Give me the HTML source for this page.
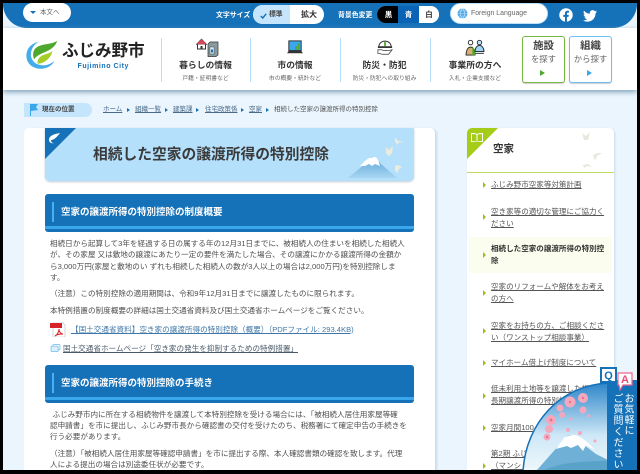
<!DOCTYPE html>
<html lang="ja"><head><meta charset="utf-8"><title>相続した空家の譲渡所得の特別控除</title>
<style>
*{box-sizing:border-box;margin:0;padding:0}
html,body{width:640px;height:474px;overflow:hidden;background:#000}
body{position:relative;font-family:"Liberation Sans","Noto Sans CJK JP",sans-serif;color:#444}
#p{position:absolute;left:3px;top:3px;width:634px;height:467px;background:#eaf5fe;overflow:hidden}
.a{position:absolute;white-space:nowrap}
.t{font-size:7.6px;line-height:11px;color:#4f4f4f;white-space:nowrap;position:absolute}
.n1{font-size:8.8px;font-weight:700;color:#333;line-height:12px;text-align:center;position:absolute;white-space:nowrap}
.n2{font-size:5.8px;color:#666;line-height:8px;text-align:center;position:absolute;white-space:nowrap}
.sep{position:absolute;top:35px;width:1px;height:44px;background:#b4defa}
.bc{position:absolute;top:102px;font-size:6.5px;line-height:10px;color:#555;white-space:nowrap}
.bc u{color:#4a6a88}
.ar{position:absolute;width:0;height:0;border-left:3px solid #1571b8;border-top:2.5px solid transparent;border-bottom:2.5px solid transparent}
.bar{position:absolute;left:42px;width:369px;height:38px;background:#1571b8;border-bottom:3px solid #1571b8;border-radius:3px;box-shadow:inset 0 -3px 0 #3aa6ec}
.bar i{position:absolute;left:6.7px;top:8px;width:2px;height:20px;background:#48b1f3}
.bar b{position:absolute;left:16px;top:12px;font-size:9.5px;line-height:14px;color:#fff;white-space:nowrap}
.sl{position:absolute;font-size:7.55px;line-height:11.6px;color:#555;text-decoration:underline;white-space:nowrap}
.tri{position:absolute;left:480px;width:0;height:0;border-left:3px solid #97c21d;border-top:3.5px solid transparent;border-bottom:3.5px solid transparent}
</style></head><body><div id="p">

<!-- header bar -->
<div class="a" style="left:0;top:0;width:634px;height:25px;background:#1571b8;border-radius:0 0 24px 24px"></div>
<div class="a" style="left:20px;top:0;width:48px;height:19px;background:#fff;border-radius:10px;font-size:6.5px;line-height:19px;color:#666;padding-left:17px">本文へ</div>
<div class="a" style="left:27px;top:8px;width:0;height:0;border-top:3.5px solid #1571b8;border-left:3px solid transparent;border-right:3px solid transparent"></div>
<div class="a" style="left:213px;top:7.5px;font-size:6.9px;line-height:9px;font-weight:700;color:#fff">文字サイズ</div>
<div class="a" style="left:250px;top:2px;width:71px;height:19px;background:#fff;border-radius:10px;overflow:hidden">
 <div class="a" style="left:0;top:0;width:37px;height:19px;background:#c4e5fb;font-size:6.8px;font-weight:700;line-height:19px;color:#444;padding-left:16px">標準</div>
 <div class="a" style="left:48px;top:0;font-size:8px;font-weight:700;line-height:19px;color:#333">拡大</div>
</div>
<svg class="a" style="left:257px;top:10px" width="7" height="6" viewBox="0 0 7 6"><path d="M.8 3l2 2L6.2.8" fill="none" stroke="#1571b8" stroke-width="1.4"/></svg>
<div class="a" style="left:335px;top:7.5px;font-size:6.9px;line-height:9px;font-weight:700;color:#fff">背景色変更</div>
<div class="a" style="left:374px;top:3px;width:62px;height:17px;background:#fff;border-radius:9px;overflow:hidden;font-size:7.5px;font-weight:700;line-height:17px;text-align:center">
 <div class="a" style="left:0;top:0;width:21px;height:17px;background:#000;color:#fff;padding-left:2px">黒</div>
 <div class="a" style="left:21px;top:0;width:21px;height:17px;background:#0a63b5;color:#fff">青</div>
 <div class="a" style="left:42px;top:0;width:20px;height:17px;background:#fff;color:#333">白</div>
</div>
<div class="a" style="left:447px;top:0;width:98px;height:21px;background:#fff;border-radius:11px;border:1px solid #bfe2fb;font-size:6.9px;line-height:19px;color:#666;padding-left:20px">Foreign Language</div>
<svg class="a" style="left:454px;top:5px" width="11" height="11" viewBox="0 0 11 11"><circle cx="5.5" cy="5.5" r="5" fill="#4aa5e6"/><path d="M.5 5.5h10M1.2 3h8.6M1.2 8h8.6M5.5.5c-3 3-3 7 0 10M5.5.5c3 3 3 7 0 10" fill="none" stroke="#cfe9fb" stroke-width=".6"/></svg>
<svg class="a" style="left:556px;top:5px" width="14" height="14" viewBox="0 0 15 15"><circle cx="7.5" cy="7.5" r="7.2" fill="#fff"/><path d="M6.4 15V9.5H4.6V7.4h1.8V5.800c0-1.900 1.100-2.900 2.800-2.900l1.500.1v1.900H9.600c-.9 0-1.100.5-1.100 1.100v1.400h2l-.3 2.100H8.500V15z" fill="#1571b8"/></svg>
<svg class="a" style="left:580px;top:7px" width="14" height="12" viewBox="0 0 24 20"><path d="M24 2.400c-.9.4-1.800.7-2.800.8 1-.6 1.800-1.600 2.200-2.700-1 .6-2 1-3.100 1.200C19.300.7 18 0 16.600 0c-2.700 0-4.900 2.200-4.900 4.900 0 .4 0 .8.100 1.100C7.700 5.800 4.100 3.900 1.700.9c-.4.700-.7 1.600-.7 2.500 0 1.700.9 3.200 2.200 4.100-.8 0-1.600-.2-2.200-.6v.1c0 2.400 1.700 4.400 3.900 4.800-.7.200-1.500.2-2.200.1.6 2 2.400 3.400 4.600 3.400C5.600 16.600 3.100 17.500.3 17.500H0c2.200 1.400 4.800 2.200 7.500 2.200 9.100 0 14-7.500 14-14v-.6c1-.7 1.800-1.600 2.500-2.700z" fill="#fff"/></svg>

<!-- white header -->
<div class="a" style="left:0;top:25px;width:634px;height:62px;background:#fff;box-shadow:0 2px 5px #7f9fb8;z-index:1"></div>
<div id="h" class="a" style="left:0;top:0;width:634px;height:100px;z-index:2">
<svg class="a" style="left:21px;top:36px" width="35" height="33" viewBox="0 0 36 36"><path d="M15 3C5 5 0 13 2 22c2 8 11 12 19 10 5-1 9-4 11-8-5 4-11 6-17 4C8 26 5 19 7 13c1-4 4-8 8-10z" fill="#43ace9"/><path d="M35 2C28 7 15 4 10 12c-2 4-1 8 0 10 4-6 12-7 18-11 3-2 6-5 7-9z" fill="#4fa82e"/><path d="M30 13c-4 4-10 3-14 7-2 2-3 5-2 7 6 0 14-5 16-14z" fill="#a4cd28"/></svg>
<div class="a" style="left:59px;top:36px;font-size:16.6px;line-height:24px;font-weight:700;color:#222;letter-spacing:-.1px">ふじみ野市</div>
<div class="a" style="left:74.500px;top:59px;font-size:7px;line-height:10px;font-weight:700;color:#1571b8;letter-spacing:.55px">Fujimino City</div>

<div class="sep" style="left:158px"></div><div class="sep" style="left:247px"></div><div class="sep" style="left:337px"></div><div class="sep" style="left:427px"></div>

<svg class="a" style="left:192px;top:35px" width="24" height="19" viewBox="0 0 24 19"><path d="M1 6.500L6.500.8 12 6.500z" fill="#d9475a" stroke="#333" stroke-width=".5"/><path d="M2.500 6.500v4.500h8V6.500" fill="#fff" stroke="#333"/><rect x="5.500" y="8" width="2" height="3" fill="#333"/><path d="M13 6l2-2h8v13l-2 1.500h-8z" fill="#8a9a9c" stroke="#333" stroke-width=".7"/><rect x="15" y="9" width="4" height="7" fill="#dff0fc" stroke="#333" stroke-width=".4"/><rect x="16" y="11.500" width="2" height="3" fill="#1571b8"/></svg>
<div class="n1" style="left:158px;width:89px;top:56px">暮らしの情報</div>
<div class="n2" style="left:158px;width:89px;top:71.500px">戸籍・証明書など</div>

<svg class="a" style="left:284px;top:37px" width="16" height="15" viewBox="0 0 18 17"><rect x="2" y="1" width="14" height="11" fill="#3aa6ec" stroke="#222"/><path d="M9 11V7h2v4zM12 11V4h2v7z" fill="#4fa82e"/><path d="M0 15h18l-2-3H2z" fill="#333"/></svg>
<div class="n1" style="left:247px;width:90px;top:56px">市の情報</div>
<div class="n2" style="left:247px;width:90px;top:71.500px">市の概要・統計など</div>

<svg class="a" style="left:374px;top:37px" width="16" height="16" viewBox="0 0 18 18"><path d="M2 8c0-9 14-9 14 0z" fill="#fff" stroke="#222"/><path d="M1 7h16v2H1z" fill="#333"/><path d="M8 2h2v5H8z" fill="#4fa82e"/><path d="M1 11h4l3 1h4l5-1-4 5H6l-5-1z" fill="#fff" stroke="#333" stroke-width=".8"/></svg>
<div class="n1" style="left:337px;width:89px;top:56px">防災・防犯</div>
<div class="n2" style="left:337px;width:89px;top:71.500px">防災・防犯への取り組み</div>

<svg class="a" style="left:461px;top:36px" width="22" height="17" viewBox="0 0 22 19"><circle cx="6" cy="4" r="2.500" fill="#fff" stroke="#222"/><path d="M1 18c0-12 10-12 10 0z" fill="#d9ae72" stroke="#222"/><path d="M8 8l3 4v6H8z" fill="#4fa82e"/><circle cx="16" cy="4" r="2.500" fill="#bfe2fb" stroke="#222"/><path d="M11 14c0-9 10-9 10 0z" fill="#9fd4f7" stroke="#222"/><path d="M11 16h10" stroke="#222"/></svg>
<div class="n1" style="left:427px;width:90px;top:56px">事業所の方へ</div>
<div class="n2" style="left:427px;width:90px;top:71.500px">入札・企業支援など</div>

<div class="a" style="left:519px;top:33px;width:43px;height:47px;border:1.500px solid #7ab642;border-radius:3px;background:#fff;text-align:center;box-shadow:0 1px 1px #ccc">
 <div style="font-size:10.400px;font-weight:700;line-height:12px;margin-top:4px;color:#444">施設</div>
 <div style="font-size:8.400px;line-height:11px;color:#666;margin-top:1px">を探す</div>
 <div class="a" style="left:17px;top:33px;width:0;height:0;border-left:5px solid #4fa82e;border-top:3px solid transparent;border-bottom:3px solid transparent"></div>
</div>
<div class="a" style="left:566px;top:33px;width:43px;height:47px;border:1.500px solid #6cc0f3;border-radius:3px;background:#fff;text-align:center;box-shadow:0 1px 1px #ccc">
 <div style="font-size:10.400px;font-weight:700;line-height:12px;margin-top:4px;color:#444">組織</div>
 <div style="font-size:8.400px;line-height:11px;color:#666;margin-top:1px">から探す</div>
 <div class="a" style="left:17px;top:33px;width:0;height:0;border-left:5px solid #3aa6ec;border-top:3px solid transparent;border-bottom:3px solid transparent"></div>
</div>
</div>

<!-- breadcrumb -->
<div class="a" style="left:21px;top:100px;width:68px;height:14px;background:#c4e5fb;border-radius:0 7px 7px 0;font-size:6.500px;line-height:14px;font-weight:700;color:#444;padding-left:18px">現在の位置</div>
<svg class="a" style="left:26px;top:101px" width="11" height="12" viewBox="0 0 11 12"><path d="M1 0v12h1V7l7-1-2-3 2-3z" fill="#3aa6ec"/></svg>
<div class="bc" style="left:100px"><u>ホーム</u></div><div class="ar" style="left:124px;top:105px"></div>
<div class="bc" style="left:132px"><u>組織一覧</u></div><div class="ar" style="left:162px;top:105px"></div>
<div class="bc" style="left:170px"><u>建築課</u></div><div class="ar" style="left:193px;top:105px"></div>
<div class="bc" style="left:202px"><u>住宅政策係</u></div><div class="ar" style="left:238px;top:105px"></div>
<div class="bc" style="left:246px"><u>空家</u></div><div class="ar" style="left:263px;top:105px"></div>
<div class="bc" style="left:271px">相続した空家の譲渡所得の特別控除</div>

<!-- main card -->
<div class="a" style="left:21px;top:125px;width:411px;height:360px;background:#fff;border-radius:5px;box-shadow:2px 1px 2px #c8dbe8"></div>
<div class="a" style="left:42px;top:125px;width:369px;height:53px;background:#b5e0fc;border-radius:0 0 5px 5px;box-shadow:0 1px 2px #c0ccd4;overflow:hidden">
 <div class="a" style="left:0;top:0;width:0;height:0;border-top:31px solid #1571b8;border-right:31px solid transparent"></div>
 <svg class="a" style="left:3px;top:5px" width="12" height="11" viewBox="0 0 12 11"><path d="M12 0C7 1 2 2 1 6c-.5 3 2 5 5 4-2 0-3-1-3-3 3 0 6-3 9-7z" fill="#fff"/></svg>
 <div class="a" style="left:48px;top:16.500px;font-size:14.750px;line-height:21px;font-weight:700;color:#3a3a3a">相続した空家の譲渡所得の特別控除</div>
 <svg class="a" style="left:300px;top:0" width="69" height="53" viewBox="0 0 69 53">
  <defs><linearGradient id="m" x1="0" y1="0" x2="0" y2="1"><stop offset="0" stop-color="#5da6d6"/><stop offset="1" stop-color="#a8d6f2"/></linearGradient></defs>
  <path d="M3 50l17-14c3-4 5-7 7-7 3 0 6 3 9 7l16 14z" fill="url(#m)"/>
  <path d="M15 38l5-5c3-3 7-4 10-4 3 1 4 5 5 9l-5-2-3 2-3-2-4 2z" fill="#fff"/>
  <path d="M50 9l3 4 7 1-6 .5-2 2-2-3zM41 19l3 3 4-4-1 7-3 3-3-3zM50 38l3-1 4 2-3 2-2 4-2-3z" fill="#ecebde"/>
 </svg>
</div>

<div class="bar" style="top:191px"><i></i><b>空家の譲渡所得の特別控除の制度概要</b></div>

<div class="t" style="left:47px;top:234.500px">相続日から起算して3年を経過する日の属する年の12月31日までに、被相続人の住まいを相続した相続人</div>
<div class="t" style="left:47px;top:245.500px">が、その家屋 又は敷地の譲渡にあたり一定の要件を満たした場合、その譲渡にかかる譲渡所得の金額か</div>
<div class="t" style="left:47px;top:257.500px">ら3,000万円(家屋と敷地のい ずれも相続した相続人の数が3人以上の場合は2,000万円)を特別控除しま</div>
<div class="t" style="left:47px;top:268.500px">す。</div>
<div class="t" style="left:47px;top:284.500px">（注意）この特別控除の適用期間は、令和9年12月31日までに譲渡したものに限られます。</div>
<div class="t" style="left:47px;top:301.500px">本特例措置の制度概要の詳細は国土交通省資料及び国土交通省ホームページをご覧ください。</div>
<svg class="a" style="left:47px;top:319px" width="16" height="15" viewBox="0 0 16 15"><path d="M3 0h9l3 3v12H3z" fill="#fff" stroke="#bbb" stroke-width=".6"/><rect x="0" y="1" width="12" height="5" fill="#d6232a"/><path d="M5 14c2-1 4-4 4-7 0 3 2 5 4 5-3 0-6 0-8 2z" fill="none" stroke="#d6232a"/></svg>
<div class="t" style="left:68px;top:320.500px;color:#3f78a8;text-decoration:underline">【国土交通省資料】空き家の譲渡所得の特別控除（概要）（PDFファイル: 293.4KB)</div>
<svg class="a" style="left:47px;top:341px" width="11" height="8" viewBox="0 0 11 9"><rect x="2.500" y=".5" width="8" height="6" rx="1" fill="#fff" stroke="#7ec4f0"/><rect x=".5" y="2.500" width="8" height="6" rx="1" fill="#dff0fc" stroke="#7ec4f0"/></svg>
<div class="t" style="left:60px;top:339.500px;text-decoration:underline;color:#4a5a6a">国土交通省ホームページ「空き家の発生を抑制するための特例措置」</div>

<div class="bar" style="top:362px"><i></i><b>空家の譲渡所得の特別控除の手続き</b></div>

<div class="t" style="left:49.500px;top:405.500px">ふじみ野市内に所在する相続物件を譲渡して本特別控除を受ける場合には、「被相続人居住用家屋等確</div>
<div class="t" style="left:47px;top:416.500px">認申請書」を市に提出し、ふじみ野市長から確認書の交付を受けたのち、税務署にて確定申告の手続きを</div>
<div class="t" style="left:47px;top:427.500px">行う必要があります。</div>
<div class="t" style="left:47px;top:444.500px">（注意）「被相続人居住用家屋等確認申請書」を市に提出する際、本人確認書類の確認を致します。代理</div>
<div class="t" style="left:47px;top:455.500px">人による提出の場合は別途委任状が必要です。</div>

<!-- sidebar -->
<div class="a" style="left:464px;top:125px;width:147px;height:360px;background:#fff;border-radius:5px;box-shadow:1px 1px 2px #c8dbe8"></div>
<div class="a" style="left:464px;top:125px;width:147px;height:45px;border-bottom:1.500px solid #bfdc62;border-radius:5px 5px 0 0;overflow:hidden">
 <div class="a" style="left:0;top:0;width:0;height:0;border-top:31px solid #a5cc18;border-right:31px solid transparent"></div>
 <svg class="a" style="left:4px;top:5px" width="12" height="9" viewBox="0 0 12 9"><path d="M.5.5c2 0 4 0 5.500 1 1.500-1 3.500-1 5.500-1v8c-2 0-4 0-5.500 1-1.500-1-3.500-1-5.500-1zM6 1.500v7" fill="none" stroke="#fff"/></svg>
 <div class="a" style="left:26px;top:14px;font-size:10.500px;line-height:14px;font-weight:700;color:#333">空家</div>
 <svg class="a" style="left:112px;top:3px" width="30" height="40" viewBox="0 0 30 40"><path d="M3 2l4 3 4-4-2 8-4 0zM14 24l5-2 4 0-5 3-2 5zM4 34l5-1 4 3-5-1-3 2z" fill="#e6e8dc"/></svg>
</div>
<div class="tri" style="top:179px"></div>
<div class="sl" style="left:488px;top:176px">ふじみ野市空家等対策計画</div>
<div class="tri" style="top:211px"></div>
<div class="sl" style="left:488px;top:203px">空き家等の適切な管理にご協力く<br>ださい</div>
<div class="a" style="left:466px;top:234px;width:143px;height:36px;background:#fbfdee"></div>
<div class="tri" style="top:249px"></div>
<div class="sl" style="left:488px;top:240px;font-weight:700;text-decoration:none;color:#333;">相続した空家の譲渡所得の特別控<br>除</div>
<div class="tri" style="top:287px"></div>
<div class="sl" style="left:488px;top:278px">空家のリフォームや解体をお考え<br>の方へ</div>
<div class="tri" style="top:325px"></div>
<div class="sl" style="left:488px;top:317px">空家をお持ちの方、ご相談くださ<br>い（ワンストップ相談事業）</div>
<div class="tri" style="top:357px"></div>
<div class="sl" style="left:488px;top:354px">マイホーム借上げ制度について</div>
<div class="tri" style="top:390px"></div>
<div class="sl" style="left:488px;top:380px">低未利用土地等を譲渡した場合の<br>長期譲渡所得の特別控除</div>
<div class="tri" style="top:422px"></div>
<div class="sl" style="left:488px;top:419px">空家月間100</div>
<div class="tri" style="top:460px"></div>
<div class="sl" style="left:488px;top:445px">第2期 ふじみ野市<br>（マンション</div>

<!-- floating Q&A -->
<svg class="a" style="left:512px;top:360px;z-index:5" width="122" height="107" viewBox="0 0 122 107">
 <defs><linearGradient id="g" x1="0" y1="0" x2="0" y2="1"><stop offset="0" stop-color="#2d86c9"/><stop offset=".6" stop-color="#cfe8f7"/><stop offset="1" stop-color="#eef7fb"/></linearGradient></defs>
 <path d="M8 108C11 60 45 22 94 20V108z" fill="url(#g)" stroke="#1571b8" stroke-width="1.500"/>
 <path d="M22 107l23-26 7-8c2-1 5-1 7 0l6 6 16 12 12 6V107z" fill="#6fb0d6"/>
 <path d="M41 86l8-11c2-2 8-3 11-3 5 1 13 7 20 15l-9-5-3 6-5-6-7 3-4-2z" fill="#fff"/>
 <path d="M30 107c12-6 30-9 62-9v9z" fill="#5aa3c8"/>
 <g fill="#f4a8bd"><circle cx="55" cy="39" r="5.500"/><circle cx="68" cy="35" r="5"/><circle cx="68" cy="47" r="3.500"/><circle cx="45" cy="45" r="3.500"/><circle cx="36" cy="57" r="5"/><circle cx="47" cy="52" r="3"/><circle cx="34" cy="66" r="4"/><circle cx="32" cy="74" r="3.500"/><circle cx="56" cy="56" r="1.500"/><circle cx="74" cy="53" r="1.500"/><circle cx="53" cy="67" r="2"/><circle cx="65" cy="70" r="2"/><circle cx="80" cy="78" r="1.500"/></g>
 <g fill="#e9708e"><circle cx="55" cy="39" r="1.200"/><circle cx="68" cy="35" r="1.200"/><circle cx="36" cy="57" r="1.500"/><circle cx="32" cy="74" r="1.200"/></g>
 <rect x="92" y="17" width="30" height="90" fill="#1571b8"/>
 <rect x="86" y="5" width="15" height="14" fill="#fff" stroke="#1571b8" stroke-width="2"/>
 <path d="M95 19l4 4 1-4z" fill="#1571b8"/>
 <path d="M103 10h14v12h-9l-3 5-1-5h-1z" fill="#fff" stroke="#f0668f" stroke-width="1.200"/>
 <text x="93.500" y="16" font-size="11" font-weight="700" fill="#1571b8" text-anchor="middle" font-family="Liberation Sans">Q</text>
 <text x="110" y="20" font-size="11" font-weight="700" fill="#ea4a7c" text-anchor="middle" font-family="Liberation Sans">A</text>
</svg>
<div class="a" style="left:618px;top:390px;width:12px;z-index:6;font-size:10px;line-height:12px;letter-spacing:.8px;color:#fff;writing-mode:vertical-rl">お気軽に</div>
<div class="a" style="left:607px;top:390px;width:12px;z-index:6;font-size:10px;line-height:12px;letter-spacing:1px;color:#fff;writing-mode:vertical-rl">ご質問ください</div>

</div></body></html>
